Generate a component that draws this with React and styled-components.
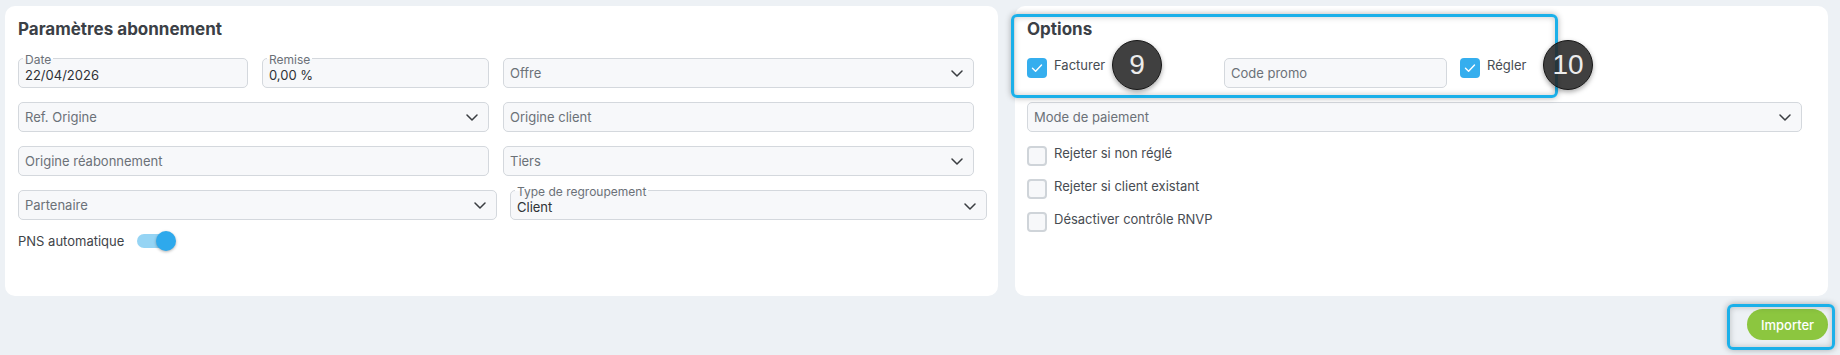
import React from "react";
import styled, { createGlobalStyle } from "styled-components";

const Global = createGlobalStyle`
  html, body { margin: 0; padding: 0; background: #edf1f5; }
  body { font-family: Inter, "Noto Sans", "Liberation Sans", sans-serif; min-height: 100vh; }
  * { box-sizing: border-box; }
`;

const Page = styled.div`
  padding: 6px 12px 0 5px;
  width: 1840px;
  height: 355px;
  background: #edf1f5;
`;

const Cards = styled.div`
  display: grid;
  grid-template-columns: 993px 813px;
  gap: 17px;
`;

const Card = styled.section`
  position: relative;
  background: #ffffff;
  border-radius: 10px;
  height: 290px;
  padding: ${(p) => p.$pad};
`;

const Title = styled.h2`
  margin: 0 0 18px;
  font-size: 17px;
  line-height: 22px;
  font-weight: 700;
  color: #3b4046;
`;

const FormColumn = styled.div`
  display: flex;
  flex-direction: column;
  gap: 14px;
`;

const Row = styled.div`
  display: grid;
  grid-template-columns: ${(p) => p.$cols};
  gap: ${(p) => p.$gap || 14}px;
  width: ${(p) => (p.$w ? `${p.$w}px` : "auto")};
`;

const FieldBox = styled.div`
  position: relative;
  height: 30px;
  border: 1px solid #d4d8dd;
  border-radius: 5px;
  background: #f7f8fa;
  display: flex;
  align-items: center;
  justify-content: space-between;
  padding: ${(p) => (p.$labelled ? "3px 10px 0 6px" : "0 10px 0 6px")};
  font-size: 13px;
  color: ${(p) => (p.$filled ? "#2e3236" : "#6b7178")};
  white-space: nowrap;
`;

const FloatLabel = styled.span`
  position: absolute;
  top: -5px;
  left: 4px;
  padding: 0 2px;
  font-size: 12px;
  line-height: 12px;
  color: #6b7178;
  background: linear-gradient(to bottom, #ffffff 0 42%, #f7f8fa 42% 100%);
`;

const Chevron = () => (
  <svg width="12" height="7" viewBox="0 0 12 7" aria-hidden="true">
    <path d="M1 1 L6 6 L11 1" fill="none" stroke="#3a3d41" strokeWidth="1.5" strokeLinecap="round" strokeLinejoin="round" />
  </svg>
);

const Field = ({ label, value, placeholder, select }) => (
  <FieldBox $filled={!!value} $labelled={!!label}>
    {label && <FloatLabel>{label}</FloatLabel>}
    <span>{value || placeholder}</span>
    {select && <Chevron />}
  </FieldBox>
);

const ToggleRow = styled.div`
  display: flex;
  align-items: center;
  gap: 13px;
  height: 20px;
  margin-top: 11px;
  font-size: 13px;
  color: #3f4449;
`;

const Track = styled.span`
  position: relative;
  display: inline-block;
  width: 34px;
  height: 14px;
  border-radius: 7px;
  background: #95d4f4;
`;

const Thumb = styled.span`
  position: absolute;
  top: -3px;
  left: 19px;
  width: 20px;
  height: 20px;
  border-radius: 50%;
  background: #2ea9ec;
  box-shadow: 0 1px 3px rgba(0, 0, 0, 0.3);
`;

const OptionsRow = styled.div`
  display: grid;
  grid-template-columns: 184px 223px auto;
  gap: 13px;
  height: 30px;
  margin-bottom: 14px;
`;

const CheckItem = styled.label`
  display: flex;
  align-items: flex-start;
  gap: 7px;
  font-size: 13px;
  line-height: 16px;
  color: #474c52;
`;

const CheckText = styled.span`
  margin-top: -1px;
`;

const Box = styled.span`
  flex: none;
  width: 20px;
  height: 20px;
  border-radius: 4px;
  display: flex;
  align-items: center;
  justify-content: center;
  background: ${(p) => (p.$on ? "#35aeee" : "#f7f8fa")};
  border: ${(p) => (p.$on ? "none" : "2px solid #cfd4d9")};
`;

const Check = ({ on, children }) => (
  <CheckItem>
    <Box $on={on}>
      {on && (
        <svg width="14" height="14" viewBox="0 0 14 14" aria-hidden="true">
          <path d="M2.5 7.2 L5.6 10.2 L11.5 4" fill="none" stroke="#ffffff" strokeWidth="1.4" strokeLinecap="round" strokeLinejoin="round" />
        </svg>
      )}
    </Box>
    <CheckText>{children}</CheckText>
  </CheckItem>
);

const CheckList = styled.div`
  display: flex;
  flex-direction: column;
  gap: 13px;
  margin-top: 14px;
`;

const Highlight = styled.div`
  position: absolute;
  left: ${(p) => p.$l}px;
  top: ${(p) => p.$t}px;
  width: ${(p) => p.$w}px;
  height: ${(p) => p.$h}px;
  border: 3px solid #1bb0e9;
  border-radius: 6px;
  box-shadow: 0 0 6px rgba(0, 0, 0, 0.3), inset 0 0 6px rgba(0, 0, 0, 0.22);
  pointer-events: none;
`;

const Badge = styled.div`
  position: absolute;
  left: ${(p) => p.$l}px;
  top: ${(p) => p.$t}px;
  width: 50px;
  height: 50px;
  border-radius: 50%;
  background: rgba(38, 38, 38, 0.88);
  border: 1.5px solid #161616;
  box-shadow: 0 2px 5px rgba(0, 0, 0, 0.35);
  display: flex;
  align-items: center;
  justify-content: center;
  font-family: "Liberation Sans", Arial, sans-serif;
  font-size: 28px;
  color: #ececec;
`;

const Footer = styled.div`
  display: flex;
  justify-content: flex-end;
  margin-top: 13px;
`;

const ButtonWrap = styled.div`
  position: relative;
`;

const ImportButton = styled.button`
  width: 81px;
  height: 31px;
  border: none;
  border-radius: 16px;
  background: #8cc63f;
  color: #ffffff;
  font-family: Inter, "Liberation Sans", sans-serif;
  font-size: 13px;
  font-weight: 500;
  cursor: pointer;
`;

export default function App() {
  return (
    <>
      <Global />
      <Page>
        <Cards>
          <Card $pad="12px 0 0 13px">
            <Title>Paramètres abonnement</Title>
            <FormColumn>
              <Row $cols="1fr 1fr" $w={956}>
                <Row $cols="230px 1fr">
                  <Field label="Date" value="22/04/2026" />
                  <Field label="Remise" value="0,00 %" />
                </Row>
                <Field placeholder="Offre" select />
              </Row>
              <Row $cols="1fr 1fr" $w={956}>
                <Field placeholder="Ref. Origine" select />
                <Field placeholder="Origine client" />
              </Row>
              <Row $cols="1fr 1fr" $w={956}>
                <Field placeholder="Origine réabonnement" />
                <Field placeholder="Tiers" select />
              </Row>
              <Row $cols="479px 1fr" $gap={13} $w={969}>
                <Field placeholder="Partenaire" select />
                <Field label="Type de regroupement" value="Client" select />
              </Row>
            </FormColumn>
            <ToggleRow>
              PNS automatique
              <Track>
                <Thumb />
              </Track>
            </ToggleRow>
          </Card>

          <Card $pad="12px 26px 0 12px">
            <Title>Options</Title>
            <OptionsRow>
              <Check on>Facturer</Check>
              <Field placeholder="Code promo" />
              <Check on>Régler</Check>
            </OptionsRow>
            <Field placeholder="Mode de paiement" select />
            <CheckList>
              <Check>Rejeter si non réglé</Check>
              <Check>Rejeter si client existant</Check>
              <Check>Désactiver contrôle RNVP</Check>
            </CheckList>
            <Highlight $l={-4} $t={8} $w={547} $h={84} />
            <Badge $l={97} $t={34}>9</Badge>
            <Badge $l={528} $t={34}>10</Badge>
          </Card>
        </Cards>
        <Footer>
          <ButtonWrap>
            <ImportButton>Importer</ImportButton>
            <Highlight $l={-20} $t={-5} $w={108} $h={46} />
          </ButtonWrap>
        </Footer>
      </Page>
    </>
  );
}
